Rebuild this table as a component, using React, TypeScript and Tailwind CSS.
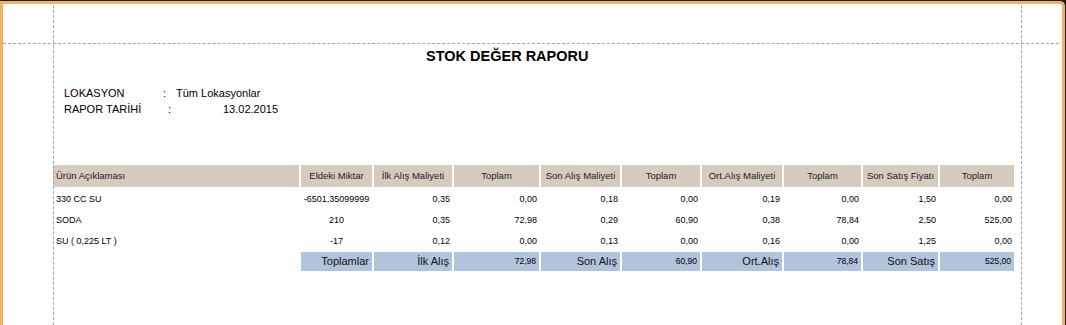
import React from 'react';

const COLS = 'grid grid-cols-[246px_71px_78px_85px_79px_78px_80px_77px_75px_74px] gap-x-[2px]';

const HEADERS = [
  'Ürün Açıklaması',
  'Eldeki Miktar',
  'İlk Alış Maliyeti',
  'Toplam',
  'Son Alış Maliyeti',
  'Toplam',
  'Ort.Alış Maliyeti',
  'Toplam',
  'Son Satış Fiyatı',
  'Toplam',
];

const ROWS: string[][] = [
  ['330 CC SU', '-6501,35099999', '0,35', '0,00', '0,18', '0,00', '0,19', '0,00', '1,50', '0,00'],
  ['SODA', '210', '0,35', '72,98', '0,29', '60,90', '0,38', '78,84', '2,50', '525,00'],
  ['SU ( 0,225 LT )', '-17', '0,12', '0,00', '0,13', '0,00', '0,16', '0,00', '1,25', '0,00'],
];

const TOTALS = [
  { text: 'Toplamlar', label: true },
  { text: 'İlk Alış', label: true },
  { text: '72,98', label: false },
  { text: 'Son Alış', label: true },
  { text: '60,90', label: false },
  { text: 'Ort.Alış', label: true },
  { text: '78,84', label: false },
  { text: 'Son Satış', label: true },
  { text: '525,00', label: false },
];

export default function App() {
  return (
    <div className="w-[1066px] h-[325px] overflow-hidden bg-[#1e1e1e] pt-px pr-px font-['Liberation_Sans',Arial,sans-serif] text-black">
      <div className="relative h-full bg-white border-t-[3px] border-x-[3px] border-[#f2b35c] rounded-tr-[5px]">
        {/* page margin guides */}
        <div className="absolute top-[39px] left-0 right-[3px] border-t border-dashed border-[#a3a3a3]" />
        <div className="absolute top-[1px] bottom-0 left-[50px] border-l border-dashed border-[#a3a3a3]" />
        <div className="absolute top-[1px] bottom-0 left-[1018px] border-l border-dashed border-[#a3a3a3]" />

        <div className="pl-[50px] pt-[44px]">
          <div className="pl-[373px] text-[14.5px] font-bold leading-4">STOK DEĞER RAPORU</div>

          <div className="mt-[21px] pl-[11px] text-[11px] leading-4">
            <div className="flex">
              <span className="w-[99px]">LOKASYON</span>
              <span className="w-[13px]">:</span>
              <span>Tüm Lokasyonlar</span>
            </div>
            <div className="flex">
              <span className="w-[104px]">RAPOR TARİHİ</span>
              <span className="w-[55px]">:</span>
              <span>13.02.2015</span>
            </div>
          </div>

          <div className="mt-[48px]">
            <div className={`${COLS} h-[22px]`}>
              {HEADERS.map((h, i) => (
                <div
                  key={i}
                  className={`flex items-center bg-[#d6ccbd] text-[9.5px] text-[#222] ${
                    i === 0 ? 'justify-start pl-[3px]' : 'justify-center'
                  }`}
                >
                  {h}
                </div>
              ))}
            </div>

            <div className="pt-[2px]">
              {ROWS.map((r, ri) => (
                <div key={ri} className={`${COLS} h-[21px] text-[9px]`}>
                  {r.map((c, ci) => (
                    <div
                      key={ci}
                      className={`flex items-center ${ci === 0 ? 'justify-start pl-[3px]' : ci === 1 ? 'justify-center' : 'justify-end pr-[2px]'}`}
                    >
                      {c}
                    </div>
                  ))}
                </div>
              ))}
            </div>

            <div className={`${COLS} h-[19px]`}>
              <div />
              {TOTALS.map((t, i) => (
                <div
                  key={i}
                  className={`flex items-center justify-end pr-[3px] bg-[#b0c4de] ${
                    t.label ? 'text-[11px] text-[#111]' : 'text-[8.5px]'
                  }`}
                >
                  {t.text}
                </div>
              ))}
            </div>
          </div>
        </div>
      </div>
    </div>
  );
}
